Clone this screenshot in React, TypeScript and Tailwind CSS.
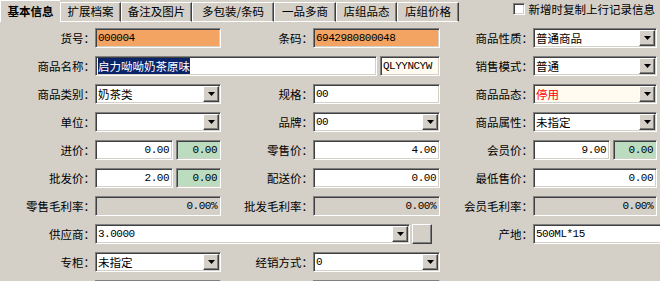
import React from 'react';

const sunken =
  'border border-t-[#808080] border-l-[#808080] border-b-white border-r-white shadow-[inset_1px_1px_0_#404040,inset_-1px_-1px_0_#d4d0c8]';
const raised =
  'border border-t-white border-l-white border-b-[#404040] border-r-[#404040] shadow-[inset_-1px_-1px_0_#808080]';
const mono = "font-['Liberation_Mono',monospace] text-[11px] tracking-[-0.5px]";

type BoxProps = {
  w: string;
  bg?: string;
  right?: boolean;
  monoText?: boolean;
  select?: boolean;
  className?: string;
  children?: React.ReactNode;
};

const Box: React.FC<BoxProps> = ({ w, bg = 'bg-white', right, monoText, select, className = '', children }) => (
  <div className={`${w} ${bg} ${sunken} ${className} flex h-[20px] shrink-0 items-center overflow-hidden`}>
    <div
      className={`min-w-0 flex-1 whitespace-nowrap leading-[15px] ${right ? 'pr-[3px] text-right' : 'pl-[2px]'} ${monoText ? mono : ''}`}
    >
      {children}
    </div>
    {select && (
      <div className={`${raised} mr-[1px] flex h-[16px] w-[16px] shrink-0 items-center justify-center bg-[#d4d0c8]`}>
        <svg width="7" height="4" viewBox="0 0 7 4">
          <polygon points="0,0 7,0 3.5,4" fill="#000" />
        </svg>
      </div>
    )}
  </div>
);

const Label: React.FC<{ w: string; children?: React.ReactNode }> = ({ w, children }) => (
  <div className={`${w} shrink-0 whitespace-nowrap text-right leading-[15px]`}>{children}</div>
);

const Row: React.FC<{ children: React.ReactNode }> = ({ children }) => (
  <div className="flex h-[28px] items-center">{children}</div>
);

const tabs = [
  { name: '扩展档案', w: 'w-[61px]' },
  { name: '备注及图片', w: 'w-[71px]' },
  { name: '多包装/条码', w: 'w-[82px]' },
  { name: '一品多商', w: 'w-[62px]' },
  { name: '店组品态', w: 'w-[61px]' },
  { name: '店组价格', w: 'w-[62px]' },
];

const App: React.FC = () => {
  return (
    <div className="h-[281px] w-[660px] overflow-hidden bg-[#d4d0c8] font-['Noto_Sans_CJK_SC',sans-serif] text-[11.5px] text-black">
      {/* tab strip */}
      <div className="flex h-[22px] items-end">
        <div className="flex h-[22px] w-[60px] items-center justify-center border-l border-t border-white font-bold">
          基本信息
        </div>
        {tabs.map((t) => (
          <div
            key={t.name}
            className={`${t.w} flex h-[20px] items-center justify-center border-l border-t border-b border-l-white border-t-white border-b-white border-r border-r-[#404040] shadow-[inset_-1px_0_0_#808080]`}
          >
            {t.name}
          </div>
        ))}
        <div className="ml-auto flex h-[22px] items-start pr-[5px] pt-[3px]">
          <div className={`${sunken} h-[12px] w-[12px] bg-white`} />
          <span className="ml-[4px] leading-[12px]">新增时复制上行记录信息</span>
        </div>
      </div>

      <div className="pt-[2px]">
        <Row>
          <Label w="w-[95px]">货号：</Label>
          <Box w="w-[126px]" bg="bg-[#f4a462]" monoText>000004</Box>
          <Label w="w-[92px]">条码：</Label>
          <Box w="w-[127px]" bg="bg-[#f4a462]" monoText>6942980800048</Box>
          <Label w="w-[93px]">商品性质：</Label>
          <Box w="w-[124px]" select>普通商品</Box>
        </Row>

        <Row>
          <Label w="w-[95px]">商品名称：</Label>
          <Box w="w-[282px]">
            <span className="bg-[#0a246a] text-white">启力呦呦奶茶原味</span>
          </Box>
          <Box w="w-[60px]" bg="bg-[#fffbf0]" monoText className="ml-[3px]">QLYYNCYW</Box>
          <Label w="w-[93px]">销售模式：</Label>
          <Box w="w-[124px]" select>普通</Box>
        </Row>

        <Row>
          <Label w="w-[95px]">商品类别：</Label>
          <Box w="w-[126px]" select>奶茶类</Box>
          <Label w="w-[92px]">规格：</Label>
          <Box w="w-[127px]" monoText>00</Box>
          <Label w="w-[93px]">商品品态：</Label>
          <Box w="w-[124px]" bg="bg-[#fffbf0]" select>
            <span className="text-[#ff0000]">停用</span>
          </Box>
        </Row>

        <Row>
          <Label w="w-[95px]">单位：</Label>
          <Box w="w-[126px]" select />
          <Label w="w-[92px]">品牌：</Label>
          <Box w="w-[127px]" select monoText>00</Box>
          <Label w="w-[93px]">商品属性：</Label>
          <Box w="w-[124px]" select>未指定</Box>
        </Row>

        <Row>
          <Label w="w-[95px]">进价：</Label>
          <Box w="w-[78px]" right monoText>0.00</Box>
          <Box w="w-[45px]" bg="bg-[#bcdcbf]" right monoText className="ml-[3px]">0.00</Box>
          <Label w="w-[92px]">零售价：</Label>
          <Box w="w-[127px]" right monoText>4.00</Box>
          <Label w="w-[93px]">会员价：</Label>
          <Box w="w-[77px]" right monoText>9.00</Box>
          <Box w="w-[44px]" bg="bg-[#bcdcbf]" right monoText className="ml-[3px]">0.00</Box>
        </Row>

        <Row>
          <Label w="w-[95px]">批发价：</Label>
          <Box w="w-[78px]" right monoText>2.00</Box>
          <Box w="w-[45px]" bg="bg-[#bcdcbf]" right monoText className="ml-[3px]">0.00</Box>
          <Label w="w-[92px]">配送价：</Label>
          <Box w="w-[127px]" right monoText>0.00</Box>
          <Label w="w-[93px]">最低售价：</Label>
          <Box w="w-[124px]" right monoText>0.00</Box>
        </Row>

        <Row>
          <Label w="w-[95px]">零售毛利率：</Label>
          <Box w="w-[126px]" bg="bg-[#d4d0c8]" right monoText>0.00%</Box>
          <Label w="w-[92px]">批发毛利率：</Label>
          <Box w="w-[127px]" bg="bg-[#d4d0c8]" right monoText>0.00%</Box>
          <Label w="w-[93px]">会员毛利率：</Label>
          <Box w="w-[124px]" bg="bg-[#d4d0c8]" right monoText>0.00%</Box>
        </Row>

        <Row>
          <Label w="w-[95px]">供应商：</Label>
          <Box w="w-[315px]" select monoText>3.0000</Box>
          <div className={`${raised} ml-[2px] h-[20px] w-[20px] shrink-0 bg-[#d4d0c8]`} />
          <Label w="w-[101px]">产地：</Label>
          <Box w="w-[130px]" monoText>500ML*15</Box>
        </Row>

        <Row>
          <Label w="w-[95px]">专柜：</Label>
          <Box w="w-[126px]" select>未指定</Box>
          <Label w="w-[92px]">经销方式：</Label>
          <Box w="w-[127px]" select monoText>0</Box>
        </Row>

        <Row>
          <Label w="w-[95px]" />
          <Box w="w-[126px]" select />
          <Label w="w-[92px]">合作方式：</Label>
          <Box w="w-[127px]" select />
        </Row>
      </div>
    </div>
  );
};

export default App;
